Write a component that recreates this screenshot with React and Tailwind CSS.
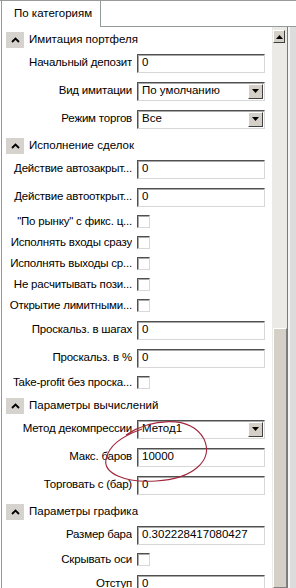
import React from "react";

const font = { fontFamily: '"Liberation Sans", Arial, sans-serif' };

const Header = ({ title }) => (
  <div className="h-[22px] pt-[3px] flex items-center shrink-0">
    <div className="ml-[4px] w-[18px] h-[16px] bg-[#d6d3ce] flex items-center justify-center">
      <svg width="9" height="6" viewBox="0 0 9 6">
        <path d="M1 5 L4.5 1.5 L8 5" fill="none" stroke="#000" strokeWidth="1.8" />
      </svg>
    </div>
    <span className="ml-[5px] text-[11.5px] text-black whitespace-nowrap">{title}</span>
  </div>
);

// labels that don't fit are already shortened, like the grid shows them
const Label = ({ text }) => (
  <div className="ml-[7px] w-[123px] text-right text-[11.5px] tracking-[-0.2px] text-black whitespace-nowrap overflow-hidden shrink-0">
    {text}
  </div>
);

const boxBorder =
  "border border-t-[#505050] border-l-[#505050] border-b-[#d8d8d8] border-r-[#d8d8d8] shadow-[inset_1px_1px_0_#a8a8a8]";

const TextRow = ({ label, value }) => (
  <div className="h-[28px] flex items-center shrink-0">
    <Label text={label} />
    <div className={`ml-[5px] w-[128px] h-[19px] bg-white ${boxBorder} flex items-center pl-[4px] text-[11.5px] text-black`}>
      {value}
    </div>
  </div>
);

const SelectRow = ({ label, value }) => (
  <div className="h-[28px] flex items-center shrink-0">
    <Label text={label} />
    <div className={`ml-[5px] w-[128px] h-[19px] bg-white ${boxBorder} flex items-center pl-[4px] pr-[1px] text-[11.5px] text-black`}>
      <span className="flex-1">{value}</span>
      <div className="w-[15px] h-[15px] bg-[#d4d0c8] border border-t-white border-l-white border-b-[#404040] border-r-[#404040] flex items-center justify-center">
        <svg width="7" height="4" viewBox="0 0 7 4">
          <path d="M0 0 L7 0 L3.5 4 Z" fill="#000" />
        </svg>
      </div>
    </div>
  </div>
);

const CheckRow = ({ label }) => (
  <div className="h-[21px] flex items-center shrink-0">
    <Label text={label} />
    <div className={`ml-[5px] w-[13px] h-[13px] bg-white ${boxBorder}`} />
  </div>
);

const App = () => {
  return (
    <div
      style={font}
      className="w-[296px] h-[588px] overflow-hidden bg-white relative flex flex-col border-t border-[#9a9a9a]"
    >
      <div className="h-[26px] flex shrink-0">
        <div className="w-[100px] ml-[1px] border-l border-r border-[#919b9c] bg-white flex items-center pl-[12px] text-[11.5px] text-black">
          По категориям
        </div>
        <div className="flex-1 border-b border-[#919b9c]" />
      </div>

      <div className="flex-1 flex min-h-0">
        <div className="ml-[1px] w-[271px] border-l border-[#919b9c] flex flex-col overflow-hidden">
          <Header title="Имитация портфеля" />
          <TextRow label="Начальный депозит" value="0" />
          <SelectRow label="Вид имитации" value="По умолчанию" />
          <SelectRow label="Режим торгов" value="Все" />

          <Header title="Исполнение сделок" />
          <TextRow label="Действие автозакрыт..." value="0" />
          <TextRow label="Действие автооткрыт..." value="0" />
          <CheckRow label='"По рынку" с фикс. ц...' />
          <CheckRow label="Исполнять входы сразу" />
          <CheckRow label="Исполнять выходы ср..." />
          <CheckRow label="Не расчитывать пози..." />
          <CheckRow label="Открытие лимитными..." />
          <TextRow label="Проскальз. в шагах" value="0" />
          <TextRow label="Проскальз. в %" value="0" />
          <CheckRow label="Take-profit без проска..." />

          <Header title="Параметры вычислений" />
          <SelectRow label="Метод декомпрессии" value="Метод1" />
          <TextRow label="Макс. баров" value="10000" />
          <TextRow label="Торговать с (бар)" value="0" />

          <Header title="Параметры графика" />
          <TextRow label="Размер бара" value="0.302228417080427" />
          <CheckRow label="Скрывать оси" />
          <TextRow label="Отступ" value="0" />
        </div>

        <div className="w-[15px] bg-[#ebeae7] flex flex-col">
          <div className="mt-[3px] ml-[1px] w-[12px] h-[13px] bg-[#d4d0c8] border border-t-white border-l-white border-b-[#404040] border-r-[#404040] flex items-center justify-center">
            <svg width="7" height="4" viewBox="0 0 7 4">
              <path d="M0 4 L7 4 L3.5 0 Z" fill="#000" />
            </svg>
          </div>
          <div className="h-[285px]" />
          <div className="flex-1 ml-[1px] bg-[#d4d0c8] border border-t-white border-l-white border-b-[#808080] border-r-[#808080]" />
        </div>

        <div className="w-[9px] border-l border-[#7a7a7a] bg-[#dcdcdc] flex">
          <div className="w-[2px] bg-[#f4f4f4]" />
        </div>
      </div>

      <svg
        className="absolute left-0 top-0 pointer-events-none"
        width="296"
        height="588"
        viewBox="0 0 296 588"
      >
        <path
          d="M126 434 C150 418, 190 413, 204 438 C214 460, 192 478, 156 480 C124 482, 103 472, 106 458 C109 445, 120 436, 142 428"
          fill="none"
          stroke="#a3283e"
          strokeWidth="1.1"
        />
      </svg>
    </div>
  );
};

export default App;
